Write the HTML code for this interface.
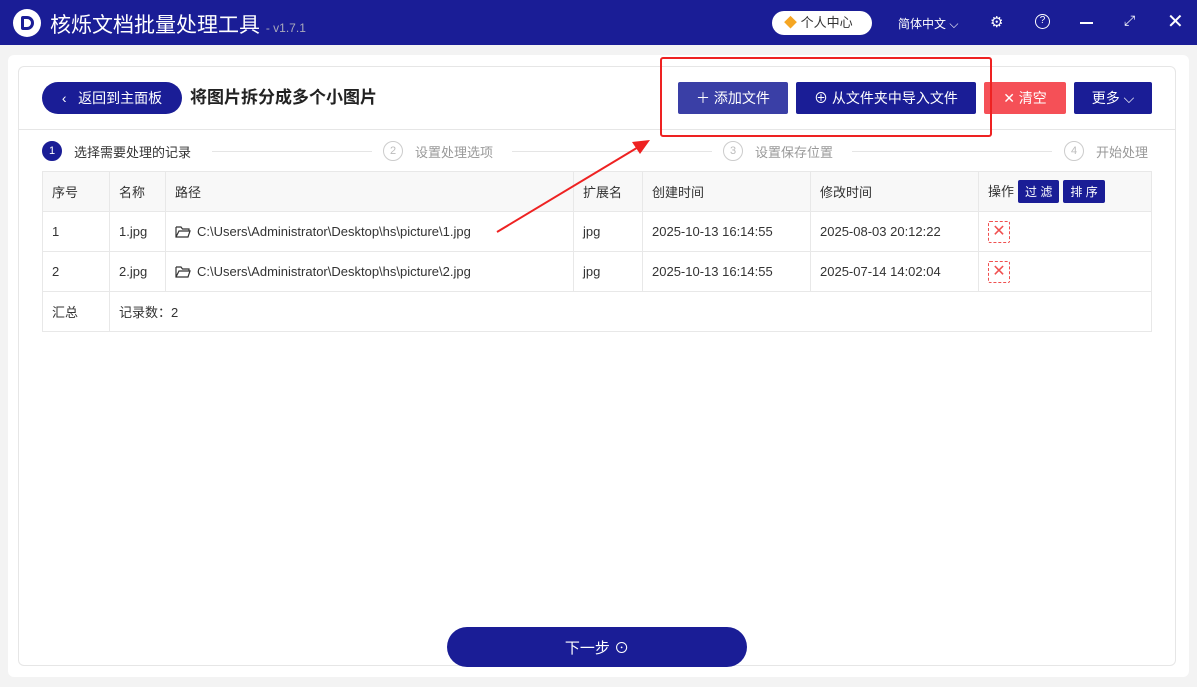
<!DOCTYPE html>
<html><head><meta charset="utf-8"><style>
*{margin:0;padding:0;box-sizing:border-box}
body{width:1197px;height:687px;overflow:hidden;background:#f3f3f3;font-family:"Liberation Sans","Noto Sans CJK SC",sans-serif;font-size:13px;color:#333;position:relative}
.abs{position:absolute}
.top{left:0;top:0;width:1197px;height:45px;background:#1a1d96}
.btn{position:absolute;height:32px;color:#fff;font-size:14px;display:flex;align-items:center;justify-content:center;border-radius:2px}
td{border:1px solid #e8e8e8;padding-left:9px;height:40px;vertical-align:middle}
table{border-collapse:collapse;position:absolute;left:42px;top:171px;width:1110px}
.x{display:inline-block;width:22px;height:22px;border:1px dashed #f05050;color:#f05050;text-align:center;line-height:20px;font-size:16px;border-radius:2px;vertical-align:middle}
.sm{display:inline-block;background:#1a1d96;color:#fff;padding:3px 7px;border-radius:2px;margin-left:4px;font-size:12px}
.step{position:absolute;top:141px;display:flex;align-items:center;color:#999;font-size:13px}
.c{width:20px;height:20px;border-radius:50%;border:1px solid #ccc;text-align:center;line-height:18px;font-size:11px;color:#bbb;margin-right:12px}
.ln{position:absolute;top:151px;height:1px;background:#e5e5e5}
.fd{vertical-align:-2px;margin-right:6px}
</style></head><body>
<div class="abs top"></div>
<div class="abs" style="left:13px;top:9px;width:28px;height:28px;border-radius:50%;background:#fff"></div>
<div class="abs" style="left:21px;top:16px;width:13px;height:14px;border:3px solid #1a1d96;border-radius:2px 7px 7px 2px"></div>
<div class="abs" style="left:50px;top:9px;color:#fff;font-size:21px">核烁文档批量处理工具 <span style="font-size:12px;color:#aab">- v1.7.1</span></div>
<div class="abs" style="left:772px;top:11px;width:100px;height:24px;border-radius:12px;background:#fff;color:#333;font-size:13px;line-height:24px;padding-left:12px"><span style="color:#f5a623">◆</span> 个人中心</div>
<div class="abs" style="left:898px;top:15px;color:#fff;font-size:12px">简体中文 ⌵</div>
<div class="abs" style="left:990px;top:13px;color:#fff;font-size:15px">⚙</div>
<div class="abs" style="left:1035px;top:14px;width:15px;height:15px;border:1.5px solid #fff;border-radius:50%;color:#fff;font-size:10px;text-align:center;line-height:12px">?</div>
<div class="abs" style="left:1080px;top:22px;width:13px;height:1.5px;background:#fff"></div>
<div class="abs" style="left:1124px;top:12px;color:#fff;font-size:14px">⤢</div>
<div class="abs" style="left:1167px;top:9px;color:#fff;font-size:20px">✕</div>
<div class="abs" style="left:8px;top:55px;width:1181px;height:622px;background:#fff;border-radius:6px"></div>
<div class="abs" style="left:18px;top:66px;width:1158px;height:600px;border:1px solid #e6e6e6;border-radius:6px"></div>
<div class="abs" style="left:18px;top:129px;width:1158px;height:1px;background:#e6e6e6"></div>
<div class="btn" style="left:42px;top:82px;width:140px;border-radius:16px;background:#1a1d96">‹&nbsp;&nbsp; 返回到主面板</div>
<div class="abs" style="left:190px;top:86px;font-size:17px;font-weight:bold;color:#222;line-height:24px">将图片拆分成多个小图片</div>
<div class="btn" style="left:678px;top:82px;width:110px;background:#3a3fa6">＋ 添加文件</div>
<div class="btn" style="left:796px;top:82px;width:180px;background:#1a1d96">⊕ 从文件夹中导入文件</div>
<div class="btn" style="left:984px;top:82px;width:82px;background:#f55057">✕ 清空</div>
<div class="btn" style="left:1074px;top:82px;width:78px;background:#1a1d96">更多 ⌵</div>
<div class="abs" style="left:660px;top:57px;width:332px;height:80px;border:2px solid #ee2222;border-radius:3px"></div>
<div class="step" style="left:42px;color:#333"><div class="c" style="background:#1a1d96;border-color:#1a1d96;color:#fff">1</div>选择需要处理的记录</div>
<div class="ln" style="left:212px;width:160px"></div>
<div class="step" style="left:383px"><div class="c">2</div>设置处理选项</div>
<div class="ln" style="left:512px;width:200px"></div>
<div class="step" style="left:723px"><div class="c">3</div>设置保存位置</div>
<div class="ln" style="left:852px;width:200px"></div>
<div class="step" style="left:1064px"><div class="c">4</div>开始处理</div>
<table>
<tr style="background:#f8f8f8"><td style="width:67px">序号</td><td style="width:56px">名称</td><td style="width:408px">路径</td><td style="width:69px">扩展名</td><td style="width:168px">创建时间</td><td style="width:168px">修改时间</td><td>操作<span class="sm">过 滤</span><span class="sm">排 序</span></td></tr>
<tr><td>1</td><td>1.jpg</td><td><svg class="fd" width="16" height="13" viewBox="0 0 16 13"><path d="M1 2h5l1.5 2H14v2M1 2v10h12l2-6H4L1 12" fill="none" stroke="#333" stroke-width="1.2"/></svg>C:\Users\Administrator\Desktop\hs\picture\1.jpg</td><td>jpg</td><td>2025-10-13 16:14:55</td><td>2025-08-03 20:12:22</td><td><span class="x">✕</span></td></tr>
<tr><td>2</td><td>2.jpg</td><td><svg class="fd" width="16" height="13" viewBox="0 0 16 13"><path d="M1 2h5l1.5 2H14v2M1 2v10h12l2-6H4L1 12" fill="none" stroke="#333" stroke-width="1.2"/></svg>C:\Users\Administrator\Desktop\hs\picture\2.jpg</td><td>jpg</td><td>2025-10-13 16:14:55</td><td>2025-07-14 14:02:04</td><td><span class="x">✕</span></td></tr>
<tr><td>汇总</td><td colspan="6">记录数：2</td></tr>
</table>
<svg class="abs" style="left:0;top:0" width="1197" height="687"><line x1="497" y1="232" x2="640" y2="146" stroke="#ee2222" stroke-width="2"/><polygon points="650,140 632,142 640,154" fill="#ee2222"/></svg>
<div class="btn" style="left:447px;top:627px;width:300px;height:40px;border-radius:20px;background:#1a1d96;font-size:15px">下一步 ⊙</div>
</body></html>
